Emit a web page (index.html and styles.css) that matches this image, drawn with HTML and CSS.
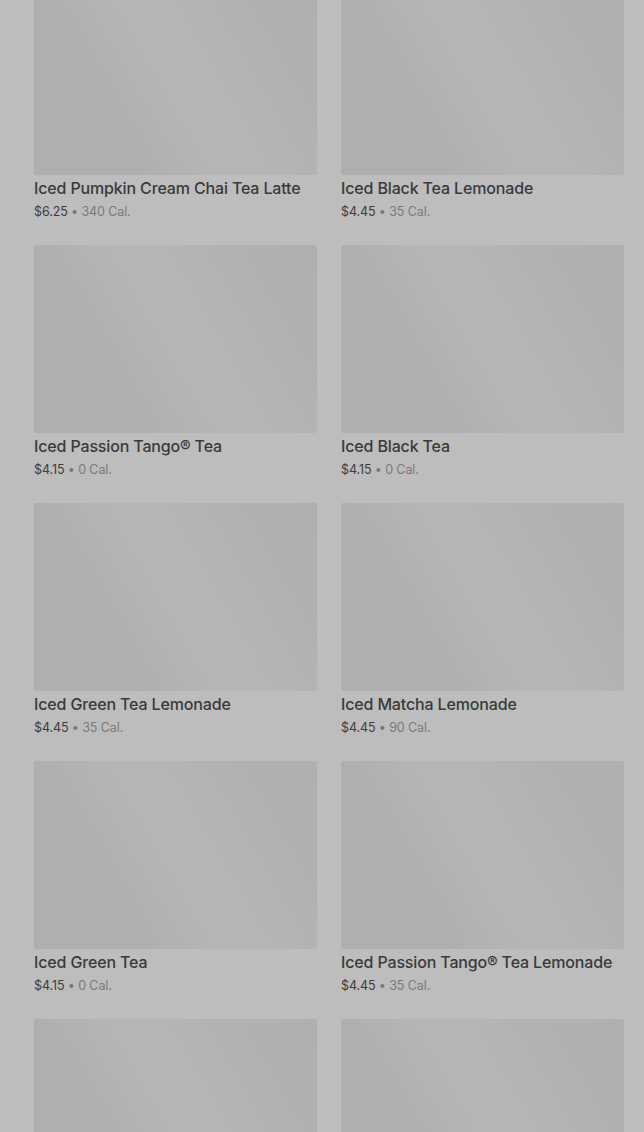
FILE: index.html
```html
<!DOCTYPE html>
<html>
<head>
<meta charset="utf-8">
<link rel="stylesheet" href="styles.css">
</head>
<body>
<main class="grid">
  <div class="card"><div class="thumb"></div><div class="name">Iced Pumpkin Cream Chai Tea Latte</div><div class="meta"><span class="price">$6.25</span> • 340 Cal.</div></div>
  <div class="card"><div class="thumb"></div><div class="name">Iced Black Tea Lemonade</div><div class="meta"><span class="price">$4.45</span> • 35 Cal.</div></div>
  <div class="card"><div class="thumb"></div><div class="name">Iced Passion Tango® Tea</div><div class="meta"><span class="price">$4.15</span> • 0 Cal.</div></div>
  <div class="card"><div class="thumb"></div><div class="name">Iced Black Tea</div><div class="meta"><span class="price">$4.15</span> • 0 Cal.</div></div>
  <div class="card"><div class="thumb"></div><div class="name">Iced Green Tea Lemonade</div><div class="meta"><span class="price">$4.45</span> • 35 Cal.</div></div>
  <div class="card"><div class="thumb"></div><div class="name">Iced Matcha Lemonade</div><div class="meta"><span class="price">$4.45</span> • 90 Cal.</div></div>
  <div class="card"><div class="thumb"></div><div class="name">Iced Green Tea</div><div class="meta"><span class="price">$4.15</span> • 0 Cal.</div></div>
  <div class="card"><div class="thumb"></div><div class="name">Iced Passion Tango® Tea Lemonade</div><div class="meta"><span class="price">$4.45</span> • 35 Cal.</div></div>
  <div class="card"><div class="thumb"></div></div>
  <div class="card"><div class="thumb"></div></div>
</main>
</body>
</html>
```
FILE: styles.css
```css
html, body {
  margin: 0;
  padding: 0;
  background: #bdbdbd;
  overflow: hidden;
  height: 1132px;
}
.grid {
  display: grid;
  grid-template-columns: 283px 283px;
  column-gap: 24px;
  padding: 0 20px 0 34px;
  margin-top: -13px;
  font-family: Inter, "Noto Sans", sans-serif;
}
.card {
  height: 258px;
  display: flex;
  flex-direction: column;
}
.thumb {
  height: 188px;
  flex: none;
  border-radius: 2px;
  background: linear-gradient(60deg, #afafaf 0%, #afafaf 28%, #b5b5b5 45%, #b5b5b5 62%, #b1b1b1 80%, #b0b0b0 100%);
}
.name {
  margin-top: 3px;
  font-size: 16px;
  line-height: 20px;
  font-weight: 500;
  color: #3a3a3a;
  letter-spacing: -0.15px;
  white-space: nowrap;
}
.meta {
  margin-top: 6px;
  font-size: 12.5px;
  line-height: 16px;
  color: #7a7a7a;
  letter-spacing: -0.1px;
}
.price {
  color: #3c3c3c;
}
```
